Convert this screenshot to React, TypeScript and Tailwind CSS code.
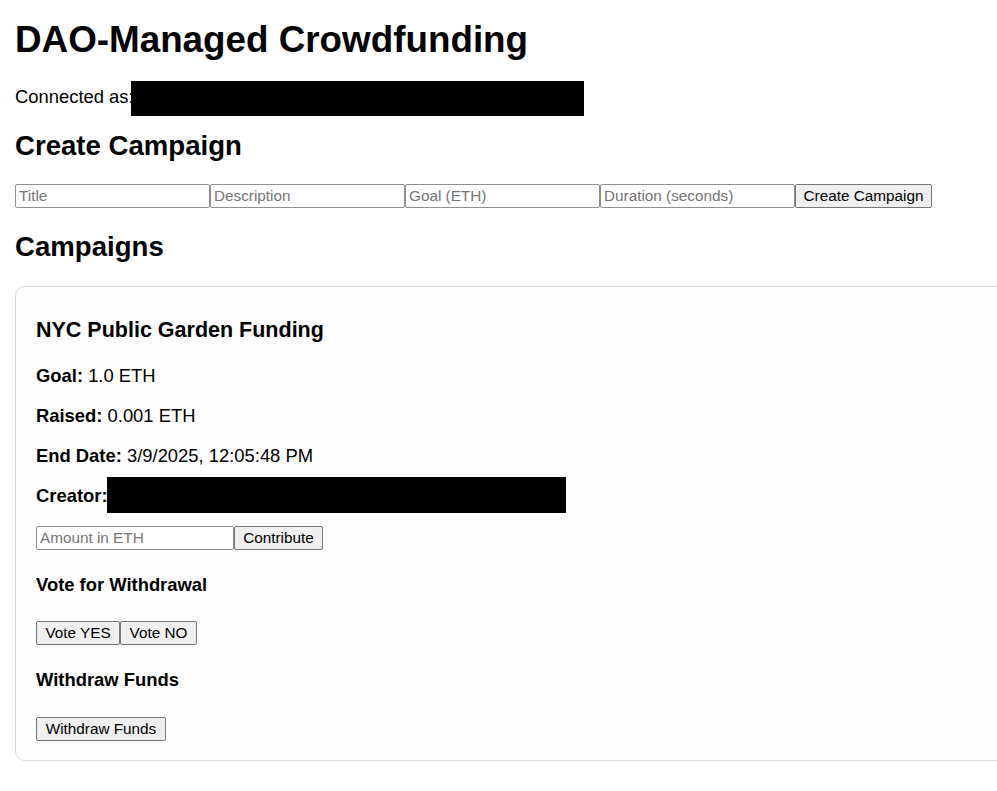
import React from "react";

const inputCls =
  "box-border h-[24px] border border-[#8f8f8f] rounded-[2px] bg-white px-[3px] text-[15.3px] text-black placeholder:text-[#757575] outline-none align-top";
const btnCls =
  "box-border h-[24px] border border-[#767676] rounded-[2px] bg-[#efefef] px-[6px] text-[15.3px] leading-none text-black align-top";

export default function App() {
  return (
    <div className="min-h-[791px] w-full overflow-hidden bg-white font-['Liberation_Sans',Arial,sans-serif] text-black">
      <div className="px-[15px] pb-[30px]">
        <h1 className="mt-[19px] mb-[25px] text-[36.8px] font-bold leading-[42px]">
          DAO-Managed Crowdfunding
        </h1>
        <p className="mb-[21px] text-[18.4px] leading-[21px]">
          Connected as:{" "}
          <span className="relative -ml-[8px] inline-block h-[35px] w-[453px] -my-[7px] bg-black align-middle" />
        </p>
        <h2 className="mb-[22px] text-[27.6px] font-bold leading-[32px]">Create Campaign</h2>
        <div className="flex h-[24px]">
          <input className={inputCls + " w-[195px]"} placeholder="Title" />
          <input className={inputCls + " w-[195px]"} placeholder="Description" />
          <input className={inputCls + " w-[195px]"} placeholder="Goal (ETH)" />
          <input className={inputCls + " w-[195px]"} placeholder="Duration (seconds)" />
          <button className={btnCls + " w-[137px]"}>Create Campaign</button>
        </div>
        <h2 className="mt-[23px] mb-[23px] text-[27.6px] font-bold leading-[32px]">Campaigns</h2>
        <div className="w-[1000px] rounded-[10px] border border-[#dadada] bg-[#fefefe] px-[20px] pt-[20px] pb-[19px]">
          <h3 className="mt-[11px] mb-[22px] text-[21.5px] font-bold leading-[25px]">
            NYC Public Garden Funding
          </h3>
          <p className="mb-[19px] text-[18.4px] leading-[21px]">
            <strong>Goal:</strong> 1.0 ETH
          </p>
          <p className="mb-[19px] text-[18.4px] leading-[21px]">
            <strong>Raised:</strong> 0.001 ETH
          </p>
          <p className="mb-[19px] text-[18.4px] leading-[21px]">
            <strong>End Date:</strong> 3/9/2025, 12:05:48 PM
          </p>
          <p className="mb-[19px] text-[18.4px] leading-[21px]">
            <strong>Creator:</strong>
            <span className="relative -top-[2px] -ml-[1px] inline-block h-[36px] w-[459px] -my-[8px] bg-black align-middle" />
          </p>
          <div className="flex h-[24px]">
            <input className={inputCls + " w-[198px]"} placeholder="Amount in ETH" />
            <button className={btnCls + " w-[89px]"}>Contribute</button>
          </div>
          <h4 className="mt-[24px] mb-[26px] text-[18.4px] font-bold leading-[21px]">
            Vote for Withdrawal
          </h4>
          <div className="flex h-[24px]">
            <button className={btnCls + " w-[84px]"}>Vote YES</button>
            <button className={btnCls + " w-[77px]"}>Vote NO</button>
          </div>
          <h4 className="mt-[24px] mb-[27px] text-[18.4px] font-bold leading-[21px]">
            Withdraw Funds
          </h4>
          <div className="flex h-[24px]">
            <button className={btnCls + " w-[130px]"}>Withdraw Funds</button>
          </div>
        </div>
      </div>
    </div>
  );
}
